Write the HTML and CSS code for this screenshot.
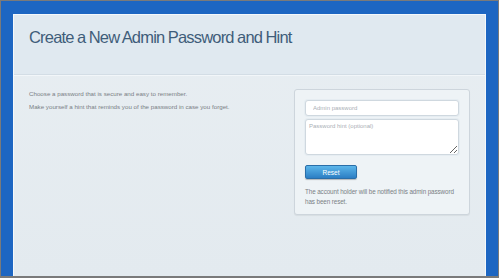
FILE: index.html
```html
<!DOCTYPE html>
<html lang="en">
<head>
    <meta charset="UTF-8">
    <meta name="viewport" content="width=device-width, initial-scale=1.0">
    <title>Create a New Admin Password and Hint</title>
    <link rel="stylesheet" href="styles.css">
</head>
<body>
    <div class="frame">
        <div class="page">
            <div class="header">
                <div class="title">Create a New Admin Password and Hint</div>
            </div>
            <div class="content">
                <div class="intro">
                    <p>Choose a password that is secure and easy to remember.</p>
                    <p>Make yourself a hint that reminds you of the password in case you forget.</p>
                </div>
                <div class="panel">
                    <input class="field" type="password" placeholder="Admin password">
                    <textarea class="field hint" placeholder="Password hint (optional)"></textarea>
                    <button class="button">Reset</button>
                    <div class="note">The account holder will be notified this admin password has been reset.</div>
                </div>
            </div>
        </div>
    </div>
</body>
</html>
```

FILE: styles.css
```css
* {
    margin: 0;
    padding: 0;
    box-sizing: border-box;
}
html, body {
    height: 100%;
    width: 100%;
    font-family: "Liberation Sans", Arial, sans-serif;
}
body {
    background: #7a7a7a;
    padding: 1px 1px 2px 1px;
}
.frame {
    height: 100%;
    background: #1d66c2;
    padding: 13px 12px 0 12px;
    display: flex;
}
.page {
    flex: 1;
    display: flex;
    flex-direction: column;
    background: linear-gradient(#e8eef2, #e3eaef);
    border: 1px solid #f4f8fb;
    border-bottom: none;
}
.header {
    height: 60px;
    background: #e0e9f0;
    border-bottom: 1px solid #d3dde5;
    box-shadow: 0 1px 0 #f2f6f9;
    padding: 13px 0 0 15px;
}
.title {
    font-size: 16.5px;
    color: #3f5d7a;
    letter-spacing: -0.8px;
    word-spacing: -0.5px;
}
.content {
    display: flex;
    justify-content: space-between;
    padding: 14px 15px 0 15px;
}
.intro {
    font-size: 6.2px;
    color: #7a7f85;
    padding-top: 1px;
}
.intro p {
    margin-bottom: 6px;
}
.panel {
    width: 176px;
    height: 126px;
    background: #eef3f6;
    border: 1px solid #cdd5dc;
    border-radius: 3px;
    box-shadow: 0 1px 1px rgba(0, 0, 0, 0.06);
    padding: 10px 10px 0 10px;
    display: flex;
    flex-direction: column;
}
.field {
    width: 154px;
    height: 16px;
    border: 1px solid #cfd8df;
    border-radius: 3px;
    background: #fff;
    box-shadow: 0 0 0 1px #e6edf2;
    font-family: "Liberation Sans", Arial, sans-serif;
    font-size: 6px;
    padding: 0 7px;
    outline: none;
}
.field::placeholder {
    color: #aab0b6;
}
.hint {
    height: 36px;
    margin-top: 3px;
    padding: 3px 3px;
    resize: vertical;
}
.button {
    width: 52px;
    height: 14px;
    margin-top: 10px;
    border: 1px solid #2a6ea8;
    border-radius: 2px;
    background: linear-gradient(#5cb6ea, #2c7ec4);
    box-shadow: 0 1px 1px rgba(0, 0, 0, 0.25);
    color: #fff;
    font-family: "Liberation Sans", Arial, sans-serif;
    font-size: 6.5px;
    cursor: pointer;
}
.note {
    margin-top: 8px;
    font-size: 6.3px;
    letter-spacing: -0.1px;
    line-height: 10px;
    color: #7a7f85;
}
```
